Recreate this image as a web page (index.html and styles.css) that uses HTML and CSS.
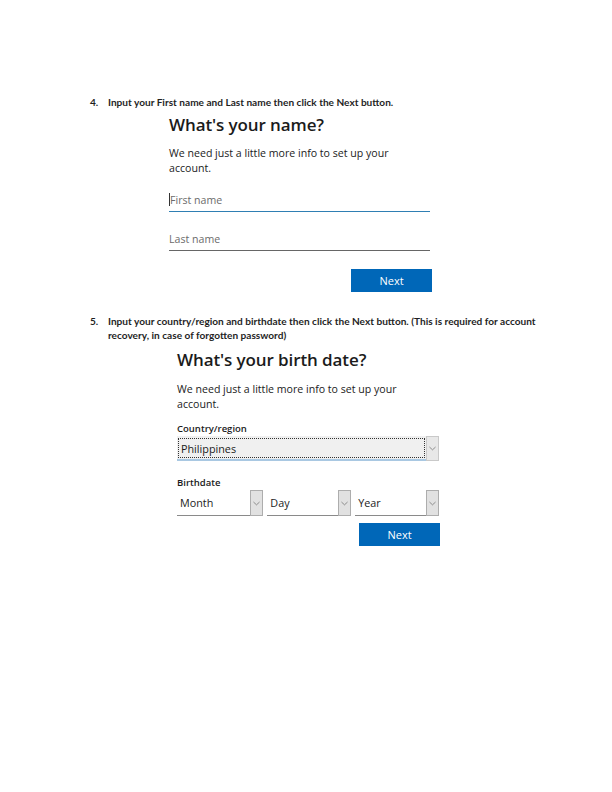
FILE: index.html
```html
<!DOCTYPE html>
<html>
<head>
<meta charset="utf-8">
<link rel="stylesheet" href="styles.css">
</head>
<body>
<div class="doc">
  <div class="step">
    <span class="num">4.</span>
    <span class="txt">Input your First name and Last name then click the Next button.</span>
  </div>
  <div class="card card1">
    <h1 class="title">What's your name?</h1>
    <p class="sub">We need just a little more info to set up your account.</p>
    <div class="field focus"><span class="caret"></span><span class="ph">First name</span></div>
    <div class="field"><span class="ph">Last name</span></div>
    <div class="actions"><span class="btn">Next</span></div>
  </div>

  <div class="step step5">
    <span class="num">5.</span>
    <span class="txt">Input your country/region and birthdate then click the Next button. (This is required for account recovery, in case of forgotten password)</span>
  </div>
  <div class="card card2">
    <h1 class="title">What's your birth date?</h1>
    <p class="sub">We need just a little more info to set up your account.</p>
    <div class="label">Country/region</div>
    <div class="country">
      <div class="cval"><span>Philippines</span></div>
      <div class="arrow light"><svg viewBox="0 0 8 5" width="7" height="5"><path d="M0.5 0.8 L4 4 L7.5 0.8" fill="none" stroke="#777" stroke-width="0.9"/></svg></div>
    </div>
    <div class="label label2">Birthdate</div>
    <div class="dates">
      <div class="dsel"><span class="dval">Month</span><div class="arrow"><svg viewBox="0 0 8 5" width="7" height="5"><path d="M0.5 0.8 L4 4 L7.5 0.8" fill="none" stroke="#777" stroke-width="0.9"/></svg></div></div>
      <div class="dsel"><span class="dval">Day</span><div class="arrow"><svg viewBox="0 0 8 5" width="7" height="5"><path d="M0.5 0.8 L4 4 L7.5 0.8" fill="none" stroke="#777" stroke-width="0.9"/></svg></div></div>
      <div class="dsel"><span class="dval">Year</span><div class="arrow"><svg viewBox="0 0 8 5" width="7" height="5"><path d="M0.5 0.8 L4 4 L7.5 0.8" fill="none" stroke="#777" stroke-width="0.9"/></svg></div></div>
    </div>
    <div class="actions actions2"><span class="btn">Next</span></div>
  </div>
</div>
</body>
</html>
```

FILE: styles.css
```css
html, body {
  margin: 0;
  padding: 0;
  background: #ffffff;
}
.doc {
  padding: 95px 0 0 90px;
  width: 456px;
}
.step {
  display: flex;
  font-family: Lato, "Liberation Sans", sans-serif;
  font-weight: 700;
  font-size: 10.1px;
  line-height: 14px;
  color: #1f1f1f;
}
.num {
  width: 18px;
  flex: none;
}
.txt {
  flex: 1;
}
.step5 {
  margin-top: 22px;
}
.card {
  font-family: "Open Sans", "Noto Sans", sans-serif;
  color: #1b1b1b;
}
.card1 {
  margin-left: 79px;
  width: 262px;
}
.card2 {
  margin-left: 87px;
  width: 262px;
}
.title {
  margin: 0;
  font-size: 17px;
  font-weight: 600;
  line-height: 24px;
  margin-top: 4px;
  letter-spacing: -0.1px;
}
.card2 .title {
  margin-top: 6px;
}
.sub {
  margin: 9px 0 0 0;
  font-size: 10.6px;
  line-height: 15px;
  width: 235px;
}
.card2 .sub {
  margin-top: 10px;
}
.field {
  height: 23px;
  margin-top: 12px;
  border-bottom: 1px solid #666;
  display: flex;
  align-items: center;
  position: relative;
  width: 261px;
}
.card1 .field + .field {
  margin-top: 15px;
}
.field.focus {
  border-bottom-color: #2f7fb3;
}
.ph {
  font-size: 10.6px;
  color: #6b6b6b;
}
.caret {
  width: 1px;
  height: 13px;
  background: #333;
}
.actions {
  display: flex;
  justify-content: flex-end;
  margin-top: 18px;
  width: 263px;
}
.btn {
  display: flex;
  align-items: center;
  justify-content: center;
  width: 81px;
  height: 23px;
  background: #0067b8;
  color: #fff;
  font-size: 11px;
}
.label {
  margin-top: 10px;
  font-size: 9.5px;
  font-weight: 600;
  line-height: 13px;
}
.label2 {
  margin-top: 15px;
}
.country {
  display: flex;
  height: 25px;
  width: 262px;
  margin-top: 1px;
}
.cval {
  flex: 1;
  background: #f0f0f0;
  border-bottom: 2px solid #a9c8e2;
  padding: 2px 1px 1px 1px;
}
.cval span {
  display: flex;
  align-items: center;
  height: 18px;
  border: 1px dotted #333;
  padding-left: 2px;
  font-size: 10.8px;
  color: #1b1b1b;
}
.arrow {
  width: 11px;
  flex: none;
  background: #e1e1e1;
  border: 1px solid #adadad;
  display: flex;
  align-items: center;
  justify-content: center;
}
.arrow.light {
  background: #e8e8e8;
  border-color: #c9c9c9;
}
.dates {
  display: flex;
  gap: 4px;
  width: 262px;
  margin-top: 1px;
}
.dsel {
  flex: 1;
  display: flex;
  height: 26px;
}
.dval {
  flex: 1;
  display: flex;
  align-items: center;
  padding-left: 3px;
  font-size: 10.8px;
  border-bottom: 1px solid #8a8a8a;
}
.dsel:first-child {
  flex: 1.03;
}
.actions2 {
  margin-top: 7px;
}
```
